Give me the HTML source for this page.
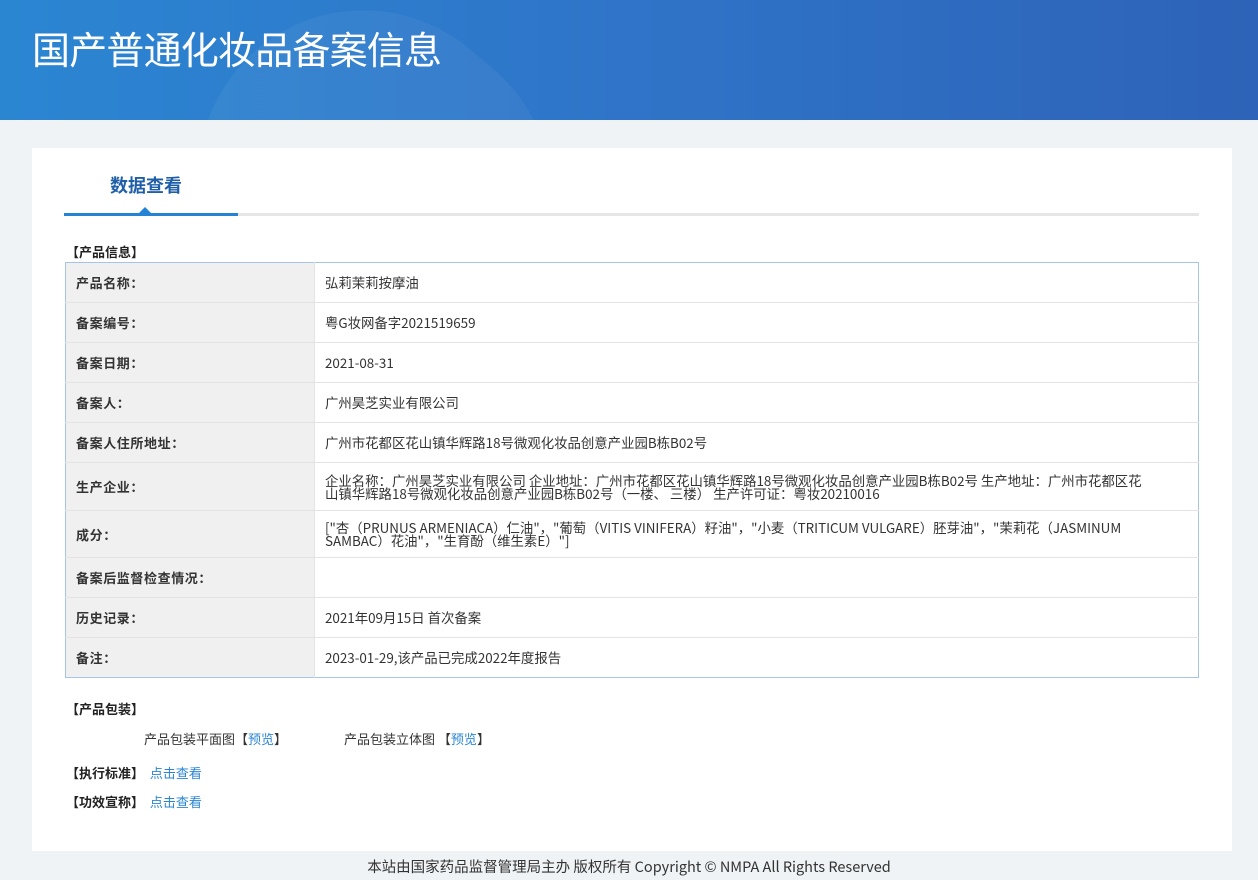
<!DOCTYPE html>
<html><head><meta charset="utf-8"><style>
*{margin:0;padding:0;box-sizing:border-box}
body{width:1258px;height:880px;background:#eff3f6;font-family:"Noto Sans CJK SC","Liberation Sans",sans-serif;font-size:13px;color:#333;position:relative;overflow:hidden}
.hd{position:absolute;left:0;top:0;width:1258px;height:120px;background:linear-gradient(90deg,#2b86d2 0%,#2f74c8 50%,#2d63b8 100%);overflow:hidden}
.hd h1{position:absolute;left:32px;top:20px;font-size:38px;font-weight:normal;color:#fff;letter-spacing:-0.8px}
.c1{position:absolute;left:195px;top:20px;width:360px;height:330px;border-radius:180px;background:rgba(255,255,255,.05);transform:rotate(40deg)}
.box{position:absolute;left:32px;top:148px;width:1200px;height:703px;background:#fff}
.tab{position:absolute;left:110px;top:172px;font-size:18px;font-weight:bold;color:#1f5fa8}
.line{position:absolute;left:64px;top:213px;width:1135px;height:3px;background:#e6e6e6}
.line2{position:absolute;left:64px;top:213px;width:174px;height:3px;background:#2483d4}
.tri{position:absolute;left:139px;top:207px;border:6px solid transparent;border-bottom-color:#2483d4;border-top:0}
.sec{position:absolute;left:66px;font-weight:bold;font-size:13px;color:#222;line-height:16px}
table{position:absolute;left:65px;top:262px;width:1134px;border-collapse:collapse;border:1px solid #a6c3e8}
td{border-top:1px solid #e3e3e3;height:40px;padding:0 50px 0 10px;vertical-align:middle;line-height:13px;font-size:13.4px}
tr:first-child td{border-top:1px solid #a6c3e8}
td.l{width:249px;background:#f0f0f0;font-weight:bold;border-right:1px solid #e3e3e3;padding-right:10px;letter-spacing:0.6px;font-size:13px}
a{color:#2b86d2;text-decoration:none}
.ft{position:absolute;top:856px;left:0;width:1258px;text-align:center;font-size:14.5px;color:#333}
</style></head><body>
<div class="hd"><div class="c1"></div><h1>国产普通化妆品备案信息</h1></div>
<div class="box"></div>
<div class="tab">数据查看</div>
<div class="line"></div><div class="line2"></div><div class="tri"></div>
<div class="sec" style="top:244px">【产品信息】</div>
<table>
<tr><td class="l">产品名称：</td><td>弘莉茉莉按摩油</td></tr>
<tr><td class="l">备案编号：</td><td>粤G妆网备字2021519659</td></tr>
<tr><td class="l">备案日期：</td><td>2021-08-31</td></tr>
<tr><td class="l">备案人：</td><td>广州昊芝实业有限公司</td></tr>
<tr><td class="l">备案人住所地址：</td><td>广州市花都区花山镇华辉路18号微观化妆品创意产业园B栋B02号</td></tr>
<tr><td class="l" style="height:48px">生产企业：</td><td>企业名称：广州昊芝实业有限公司 企业地址：广州市花都区花山镇华辉路18号微观化妆品创意产业园B栋B02号 生产地址：广州市花都区花山镇华辉路18号微观化妆品创意产业园B栋B02号（一楼、 三楼） 生产许可证：粤妆20210016</td></tr>
<tr><td class="l" style="height:47px">成分：</td><td>["杏（PRUNUS ARMENIACA）仁油"，"葡萄（VITIS VINIFERA）籽油"，"小麦（TRITICUM VULGARE）胚芽油"，"茉莉花（JASMINUM SAMBAC）花油"，"生育酚（维生素E）"]</td></tr>
<tr><td class="l">备案后监督检查情况：</td><td></td></tr>
<tr><td class="l">历史记录：</td><td>2021年09月15日 首次备案</td></tr>
<tr><td class="l">备注：</td><td>2023-01-29,该产品已完成2022年度报告</td></tr>
</table>
<div class="sec" style="top:701px">【产品包装】</div>
<div style="position:absolute;left:144px;top:729px">产品包装平面图【<a>预览</a>】</div>
<div style="position:absolute;left:344px;top:729px">产品包装立体图 【<a>预览</a>】</div>
<div class="sec" style="top:765px">【执行标准】&nbsp;&nbsp;<a style="font-weight:normal">点击查看</a></div>
<div class="sec" style="top:794px">【功效宣称】&nbsp;&nbsp;<a style="font-weight:normal">点击查看</a></div>
<div class="ft">本站由国家药品监督管理局主办 版权所有 Copyright © NMPA All Rights Reserved</div>
</body></html>
